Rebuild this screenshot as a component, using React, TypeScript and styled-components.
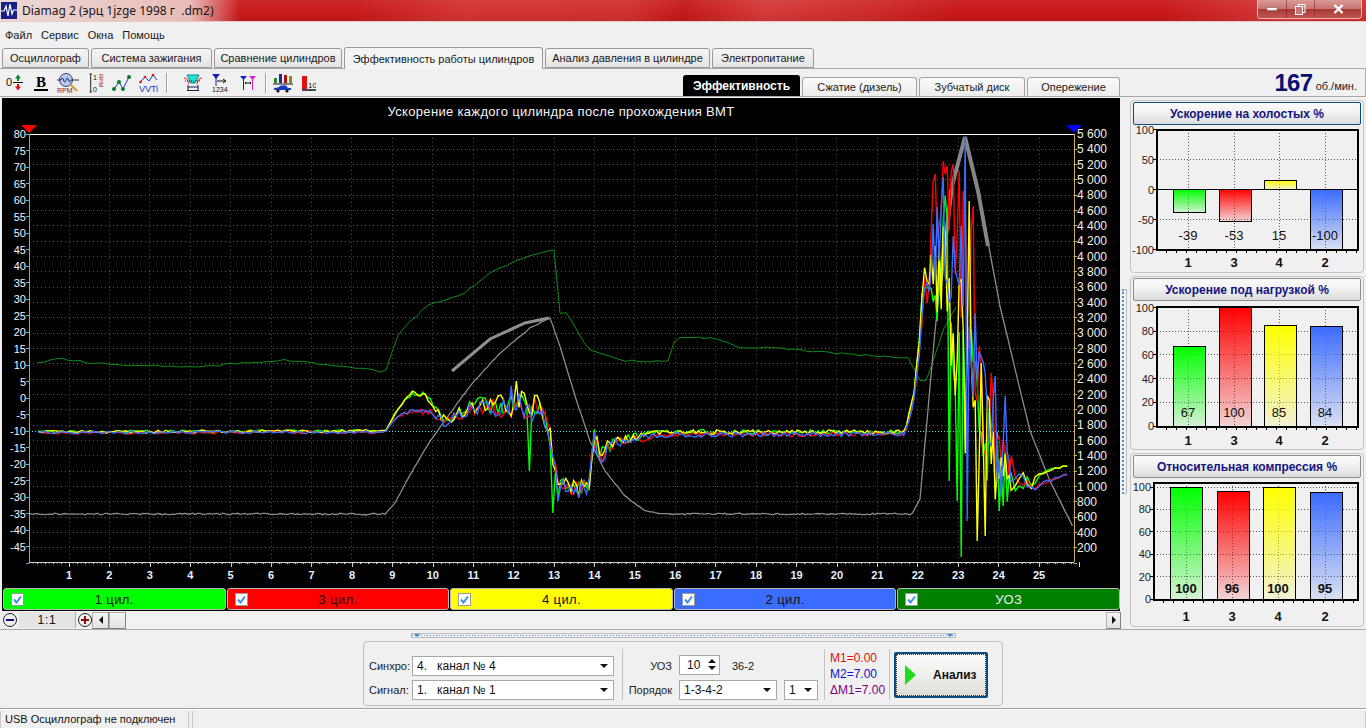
import React from 'react';
import styled, { createGlobalStyle } from 'styled-components';

const GlobalStyle = createGlobalStyle`
  html, body { margin: 0; padding: 0; background: #f0f0f0; overflow: hidden; }
  body { font-family: "Liberation Sans", Arial, sans-serif; font-size: 12px; color: #111; }
`;

const Window = styled.div`
  width: 1366px;
  height: 728px;
  display: flex;
  flex-direction: column;
  overflow: hidden;
  background: #f0f0f0;
`;

/* ---------- title bar ---------- */
const TitleBar = styled.div`
  height: 21px;
  flex: none;
  display: flex;
  align-items: center;
  padding-left: 1px;
  border-bottom: 1px solid #e8c8c8;
  background:
    linear-gradient(90deg, rgba(238, 226, 222, 0.95) 0, rgba(236, 205, 200, 0.9) 190px, rgba(220, 120, 110, 0) 240px),
    linear-gradient(180deg, rgba(255, 255, 255, 0.06) 0, rgba(255, 255, 255, 0) 60%, rgba(0, 0, 0, 0.06) 100%),
    linear-gradient(100deg, #c81a1a 0, #c81a1a 26%, #d23434 34%, #d03030 46%, #c41a1a 50%, #d43a3a 56%, #cc2a2a 64%, #c81818 70%, #c81818 85%, #d43a3a 94%, #cf3030 100%);
`;

const TitleText = styled.span`
  font-family: "Noto Sans", "Open Sans", sans-serif;
  font-size: 12px;
  color: #16161a;
  margin-left: 5px;
  white-space: pre;
`;

const WinButtons = styled.div`
  margin-left: auto;
  margin-right: 4px;
  align-self: flex-start;
  display: flex;
  height: 18px;
  border: 1px solid rgba(255, 255, 255, 0.65);
  border-top: none;
  border-radius: 0 0 4px 4px;
  overflow: hidden;
`;

const WinButton = styled.div<{ $w: number }>`
  width: ${(p) => p.$w}px;
  display: flex;
  align-items: center;
  justify-content: center;
  border-right: 1px solid rgba(120, 30, 30, 0.5);
  background: linear-gradient(180deg, #d99a96 0, #c97672 48%, #a83a36 52%, #c05450 100%);
  &:last-child { border-right: none; }
`;

/* ---------- menu and tabs ---------- */
const MenuBar = styled.div`
  height: 24px;
  flex: none;
  display: flex;
  align-items: center;
  gap: 9px;
  padding: 2px 0 0 5px;
  box-sizing: border-box;
  font-size: 11px;
  color: #1a1a1a;
`;

const TabRow = styled.div`
  height: 23px;
  flex: none;
  display: flex;
  align-items: flex-end;
  padding-left: 2px;
  gap: 2px;
  border-bottom: 1px solid #a8a8a8;
  box-sizing: border-box;
`;

const Tab = styled.div<{ $w: number; $active?: boolean }>`
  width: ${(p) => p.$w}px;
  height: ${(p) => (p.$active ? 22 : 20)}px;
  margin-bottom: ${(p) => (p.$active ? -1 : 0)}px;
  box-sizing: border-box;
  display: flex;
  align-items: center;
  justify-content: center;
  font-size: 11px;
  color: #1a1a1a;
  border: 1px solid #9a9a9a;
  border-bottom: ${(p) => (p.$active ? 'none' : '1px solid #9a9a9a')};
  border-radius: 3px 3px 0 0;
  background: ${(p) => (p.$active ? '#f4f4f4' : 'linear-gradient(180deg, #f6f6f6, #e4e4e4)')};
`;

const ToolRow = styled.div`
  height: 28px;
  flex: none;
  display: flex;
  align-items: flex-end;
  box-sizing: border-box;
  border-right: 1px solid #b0b0b0;
  border-bottom: 1px solid #a8a8a8;
  padding-left: 2px;
  position: relative;
`;

const ToolIcons = styled.div`
  width: 681px;
  height: 27px;
  flex: none;
  display: flex;
  align-items: center;
`;

const ToolIcon = styled.svg<{ $ml: number }>`
  margin-left: ${(p) => p.$ml}px;
  flex: none;
`;

const ToolSep = styled.div<{ $ml: number }>`
  width: 1px;
  height: 20px;
  margin-left: ${(p) => p.$ml}px;
  background: #a0a0a0;
  border-right: 1px solid #fff;
  flex: none;
`;

const SubTabs = styled.div`
  display: flex;
  align-items: flex-end;
  gap: 2px;
`;

const SubTab = styled.div<{ $w: number; $active?: boolean }>`
  width: ${(p) => p.$w}px;
  height: ${(p) => (p.$active ? 21 : 19)}px;
  box-sizing: border-box;
  display: flex;
  align-items: center;
  justify-content: center;
  font-size: ${(p) => (p.$active ? 12 : 11)}px;
  font-weight: ${(p) => (p.$active ? 700 : 400)};
  color: ${(p) => (p.$active ? '#fff' : '#222')};
  background: ${(p) => (p.$active ? '#000' : 'linear-gradient(180deg, #fafafa, #ececec)')};
  border: 1px solid ${(p) => (p.$active ? '#000' : '#a4a4a4')};
  border-bottom: none;
  border-radius: 3px 3px 0 0;
`;

const RpmBox = styled.div`
  margin-left: auto;
  margin-right: 8px;
  height: 27px;
  display: flex;
  align-items: center;
  gap: 3px;
`;

const RpmValue = styled.span`
  font-size: 24px;
  font-weight: 700;
  color: #0a1070;
  letter-spacing: -0.6px;
`;

const RpmUnit = styled.span`
  font-size: 11px;
  color: #222;
  margin-top: 6px;
`;

/* ---------- main body ---------- */
const Body = styled.div`
  height: 532px;
  flex: none;
  display: flex;
`;

const LeftColumn = styled.div`
  width: 1121px;
  flex: none;
  padding: 1px 0 0 2px;
  box-sizing: border-box;
  display: flex;
  flex-direction: column;
`;

const PlotPanel = styled.div`
  width: 1118px;
  height: 513px;
  background: #000;
  display: flex;
  flex-direction: column;
  flex: none;
`;

const PlotTitle = styled.div`
  height: 27px;
  flex: none;
  color: #f4f4f4;
  font-size: 13px;
  text-align: center;
  line-height: 27px;
  letter-spacing: 0.33px;
  padding-right: 0;
`;

const PlotSvg = styled.svg`
  display: block;
  flex: none;
`;

const Legend = styled.div`
  display: flex;
  gap: 1px;
  padding-left: 1px;
  height: 22px;
  flex: none;
`;

const LegendItem = styled.div<{ $bg: string; $fg: string }>`
  flex: 1;
  box-sizing: border-box;
  display: flex;
  align-items: center;
  position: relative;
  background: ${(p) => p.$bg};
  color: ${(p) => p.$fg};
  border: 1px solid #b8b8b8;
  border-radius: 3px;
  font-size: 13px;
  letter-spacing: 0.4px;
`;

const LegendLabel = styled.span`
  flex: 1;
  text-align: center;
`;

const CheckBox = styled.div`
  width: 13px;
  height: 13px;
  box-sizing: border-box;
  margin-left: 7px;
  background: #fff;
  border: 1px solid #9a9a9a;
  display: flex;
  align-items: center;
  justify-content: center;
  position: absolute;
`;

const ScrollRow = styled.div`
  height: 18px;
  flex: none;
  display: flex;
  align-items: center;
  width: 1118px;
  margin-left: 1px;
`;

const ZoomRound = styled.div`
  width: 14px;
  height: 14px;
  border-radius: 50%;
  box-sizing: border-box;
  border: 1px solid #222;
  background: #eee;
  display: flex;
  align-items: center;
  justify-content: center;
  flex: none;
`;

const ZoomBox = styled.div`
  width: 56px;
  height: 16px;
  margin: 0 2px;
  background: #e4e4e4;
  border-right: 1px solid #aaa;
  font-size: 12px;
  text-align: center;
  line-height: 17px;
  letter-spacing: 0.8px;
  flex: none;
`;

const ScrollBtn = styled.div<{ $w: number }>`
  width: ${(p) => p.$w}px;
  height: 17px;
  box-sizing: border-box;
  background: linear-gradient(180deg, #f4f4f4, #e2e2e2);
  border: 1px solid #b0b0b0;
  border-bottom-color: #808080;
  border-right-color: #808080;
  display: flex;
  align-items: center;
  justify-content: center;
  flex: none;
`;

const ScrollTrack = styled.div`
  flex: 1;
  height: 17px;
  background: repeating-conic-gradient(#e8e8e8 0 25%, #fbfbfb 0 50%) 0 0 / 2px 2px;
`;

const Arrow = styled.div<{ $dir: 'l' | 'r' | 'u' | 'd'; $s?: number }>`
  width: 0;
  height: 0;
  border-style: solid;
  ${(p) => {
    const s = p.$s ?? 4;
    if (p.$dir === 'l') return `border-width:${s}px ${s}px ${s}px 0;border-color:transparent #111 transparent transparent;`;
    if (p.$dir === 'r') return `border-width:${s}px 0 ${s}px ${s}px;border-color:transparent transparent transparent #111;`;
    if (p.$dir === 'u') return `border-width:0 ${s}px ${s}px ${s}px;border-color:transparent transparent #111 transparent;`;
    return `border-width:${s}px ${s}px 0 ${s}px;border-color:#111 transparent transparent transparent;`;
  }}
`;

const Grip = styled.div`
  width: 9px;
  flex: none;
  display: flex;
  align-items: center;
  padding-top: 56px;
  box-sizing: border-box;
`;

const GripHandle = styled.div`
  width: 5px;
  height: 205px;
  margin-left: 1px;
  box-sizing: border-box;
  border: 1px solid #bbb;
  background: #f4f4f4;
  border-left: 2px dotted #4a90d8;
`;

const RightColumn = styled.div`
  width: 234px;
  flex: none;
  padding-top: 3px;
  display: flex;
  flex-direction: column;
  gap: 3px;
`;

const GroupBox = styled.div<{ $h: number }>`
  height: ${(p) => p.$h}px;
  box-sizing: border-box;
  border: 1px solid #c4c4c4;
  border-radius: 4px;
  padding: 1px 2px 0;
  flex: none;
  background: #f0f0f0;
`;

const ChartHeader = styled.div<{ $focus?: boolean }>`
  height: 23px;
  box-sizing: border-box;
  display: flex;
  align-items: center;
  justify-content: center;
  font-size: 12px;
  font-weight: 700;
  color: #14147e;
  border: 1px solid ${(p) => (p.$focus ? '#0a4a80' : '#8c8c8c')};
  border-radius: 2px;
  background: linear-gradient(180deg, #fbfbfb 0, #f0f0f0 50%, #dcdcdc 100%);
`;

const MiniSvg = styled.svg`
  display: block;
  margin-left: -2px;
`;

/* ---------- bottom ---------- */
const Bottom = styled.div`
  flex: 1;
  display: flex;
  flex-direction: column;
  align-items: center;
  border-top: 1px solid #a8a8a8;
`;

const SplitBar = styled.div`
  width: 545px;
  height: 5px;
  margin-top: 3px;
  box-sizing: border-box;
  border: 1px solid #bbb;
  display: flex;
  align-items: center;
  justify-content: space-between;
  padding: 0 2px;
  background: linear-gradient(90deg, #4a90d8 50%, transparent 50%) 0 1px / 3px 1px repeat-x;
  flex: none;
`;

const SplitMark = styled.div`
  width: 0;
  height: 0;
  border-style: solid;
  border-width: 3px 3px 0;
  border-color: #3a88d8 transparent transparent;
`;

const Controls = styled.div`
  width: 640px;
  height: 65px;
  margin-top: 3px;
  box-sizing: border-box;
  border: 1px solid #c0c0c0;
  border-radius: 4px;
  display: flex;
  align-items: center;
  padding: 2px 0 0 5px;
  flex: none;
`;

const FieldStack = styled.div`
  display: flex;
  flex-direction: column;
  gap: 4px;
  margin-top: 6px;
`;

const FieldRow = styled.div`
  display: flex;
  align-items: center;
  height: 20px;
`;

const FieldLabel = styled.span<{ $w: number; $right?: boolean }>`
  width: ${(p) => p.$w}px;
  text-align: ${(p) => (p.$right ? 'right' : 'left')};
  flex: none;
  font-size: 11px;
  color: #222;
`;

const Combo = styled.div<{ $w: number; $ml?: number }>`
  width: ${(p) => p.$w}px;
  margin-left: ${(p) => p.$ml ?? 0}px;
  height: 20px;
  box-sizing: border-box;
  background: #fff;
  border: 1px solid #a8a8a8;
  display: flex;
  align-items: center;
  justify-content: space-between;
  padding: 0 5px 0 4px;
  font-size: 12px;
  white-space: pre;
  flex: none;
`;

const VSep = styled.div<{ $ml: number }>`
  width: 1px;
  height: 51px;
  margin: 0 0 0 ${(p) => p.$ml}px;
  background: #c4c4c4;
  flex: none;
`;

const Spin = styled.div`
  width: 41px;
  height: 20px;
  margin-top: -2px;
  box-sizing: border-box;
  background: #fff;
  border: 1px solid #a8a8a8;
  display: flex;
  align-items: center;
  justify-content: space-between;
  padding: 0 3px 0 7px;
  font-size: 12px;
  flex: none;
`;

const SpinArrows = styled.div`
  display: flex;
  flex-direction: column;
  gap: 3px;
`;

const MiniText = styled.span`
  font-size: 11px;
  color: #222;
  margin-left: 12px;
`;

const Measures = styled.div`
  width: 64px;
  padding-left: 5px;
  box-sizing: border-box;
  display: flex;
  flex-direction: column;
  gap: 3px;
  font-size: 12px;
  flex: none;
`;

const Measure = styled.span<{ $c: string }>`
  color: ${(p) => p.$c};
  height: 13px;
  line-height: 13px;
`;

const RunButton = styled.div`
  width: 94px;
  height: 46px;
  margin: 0 0 0 4px;
  box-sizing: border-box;
  border: 2px solid #0a4a80;
  border-radius: 2px;
  outline: 1px dotted #333;
  outline-offset: -3px;
  background: linear-gradient(180deg, #fafafa 0, #eeeeea 55%, #dedcd4 100%);
  display: flex;
  align-items: center;
  padding-left: 9px;
  font-size: 12px;
  font-weight: 700;
  flex: none;
`;

const RunIcon = styled.div`
  width: 0;
  height: 0;
  border-style: solid;
  border-width: 10px 0 10px 11px;
  border-color: transparent transparent transparent #1fdc1f;
  margin-right: 17px;
`;

const StatusBar = styled.div`
  height: 20px;
  flex: none;
  display: flex;
  gap: 3px;
  border-top: 1px solid #a0a0a0;
  box-shadow: inset 0 1px 0 #fff;
  padding-top: 2px;
  box-sizing: border-box;
`;

const StatusCell = styled.div<{ $w?: number }>`
  width: ${(p) => (p.$w ? `${p.$w}px` : 'auto')};
  flex: ${(p) => (p.$w ? 'none' : 1)};
  font-size: 11px;
  padding-left: 4px;
  box-sizing: border-box;
  border-left: 1px solid #c8c8c8;
  border-right: 1px solid #c8c8c8;
  line-height: 16px;
`;

/* ---------- data for main plot ---------- */
type Knot = [number, number];

const lerp = (k: Knot[], x: number) => {
  if (x <= k[0][0]) return k[0][1];
  for (let i = 1; i < k.length; i++) {
    if (x <= k[i][0]) {
      const t = (x - k[i - 1][0]) / (k[i][0] - k[i - 1][0]);
      return k[i - 1][1] + (k[i][1] - k[i - 1][1]) * t;
    }
  }
  return k[k.length - 1][1];
};

const rng = (seed: number) => {
  let s = seed;
  return () => {
    s = (s * 1664525 + 1013904223) % 4294967296;
    return s / 4294967296;
  };
};

const toPoints = (p: number[][]) => p.map(([x, y]) => `${x.toFixed(1)},${y.toFixed(1)}`).join(' ');

const ampKnots: Knot[] = [
  [38, 3], [385, 3], [400, 3], [430, 7], [470, 14], [500, 22], [548, 34], [556, 12], [590, 18], [596, 20],
  [612, 10], [660, 5], [905, 4], [915, 6], [925, 30], [945, 150], [965, 190], [978, 120], [995, 85],
  [1012, 40], [1030, 10], [1045, 4], [1070, 1.5],
];

const highKnots: Knot[] = [
  [38, 431], [385, 430], [398, 408], [412, 392], [425, 393], [445, 420], [470, 405], [520, 403], [545, 412],
  [558, 482], [580, 488], [590, 480], [593, 432], [600, 452], [615, 440], [660, 431], [905, 431], [915, 385],
  [925, 270], [945, 235], [962, 330], [985, 425], [1000, 472], [1030, 484], [1045, 470], [1070, 464],
];

const lowKnots: Knot[] = [
  [38, 432], [385, 431], [398, 415], [412, 410], [430, 412], [445, 422], [470, 408], [520, 405], [545, 414],
  [558, 482], [580, 490], [590, 482], [593, 432], [600, 456], [615, 442], [660, 434], [905, 433], [915, 395],
  [925, 285], [945, 245], [962, 310], [985, 410], [1000, 465], [1030, 488], [1045, 482], [1070, 472],
];

const makeTrace = (seed: number, knots: Knot[], spikes: Knot[], shift = 0) => {
  const r = rng(seed);
  const pts: number[][] = [];
  let x = 38;
  while (x <= 1070) {
    const burst = x > 400 && x < 1010;
    const m = lerp(knots, x);
    const a = lerp(ampKnots, x);
    const y = Math.min(561, Math.max(134, m + (r() - 0.5) * a + (x > 930 && x < 975 ? shift : 0)));
    pts.push([x, y]);
    x += x > 925 && x < 1010 ? 2 : burst ? 2.6 : 4;
  }
  spikes.forEach(([sx, sy]) => {
    const i = pts.findIndex((p) => p[0] >= sx);
    if (i >= 0) pts[i][1] = sy;
  });
  return toPoints(pts);
};

const traces = [
  { color: '#00ff00', pts: makeTrace(11, highKnots, [[948, 480], [957, 500], [961, 556], [998, 510], [1002, 505], [527, 470], [552, 512], [556, 495]], 30) },
  { color: '#ff0000', pts: makeTrace(23, lowKnots, [[947, 165], [952, 163], [958, 170], [962, 190], [972, 205], [977, 400], [990, 372]], -55) },
  { color: '#ffff00', pts: makeTrace(37, highKnots, [[938, 245], [968, 560], [977, 540], [984, 535], [968, 200], [514, 380], [553, 470]], 25) },
  { color: '#3a6cff', pts: makeTrace(53, lowKnots, [[964, 136], [966, 520], [985, 372], [995, 375], [1005, 395], [510, 385], [556, 500]], -10) },
];

const rpmPts = (() => {
  const k: Knot[] = [
    [30, 513], [385, 513], [395, 502], [410, 474], [430, 440], [470, 385], [500, 352], [530, 327], [550, 317],
    [560, 345], [575, 395], [590, 440], [605, 470], [625, 495], [645, 510], [665, 513], [912, 513], [920, 498],
    [935, 330], [950, 190], [965, 136], [985, 225], [1000, 305], [1030, 430], [1050, 480], [1074, 528],
  ];
  const r = rng(71);
  const p: number[][] = [];
  for (let x = 30; x <= 1074; x += 2.5) {
    const flat = x < 385 || (x > 660 && x < 912);
    p.push([x, lerp(k, x) + (r() - 0.5) * (flat ? 1.6 : 0.8)]);
  }
  return toPoints(p);
})();

const uozPts = (() => {
  const k: Knot[] = [
    [38, 362], [60, 358], [100, 363], [200, 366], [280, 359], [340, 365], [385, 371], [400, 330], [430, 303],
    [460, 295], [490, 272], [530, 254], [555, 249], [556, 312], [566, 312], [590, 350], [625, 360], [670, 360],
    [675, 337], [710, 337], [740, 346], [790, 348], [860, 354], [910, 357], [918, 380], [926, 380], [945, 325], [960, 300],
  ];
  const r = rng(91);
  const p: number[][] = [];
  for (let x = 38; x <= 960; x += 6) p.push([x, lerp(k, x) + (r() - 0.5) * 2]);
  return toPoints(p);
})();

const range = (n: number, f: (i: number) => number) => Array.from({ length: n }, (_, i) => f(i));

const MainPlot: React.FC = () => {
  const left = 29;
  const right = 1074;
  const top = 133;
  const bottom = 561;
  const gridY = range(28, (i) => top + 15.33 * (i + 1));
  const xLabels = range(25, (i) => 69 + 40.42 * i);
  const leftLabels = range(26, (i) => 80 - 5 * i);
  const rightLabels = range(28, (i) => 5600 - 200 * i);
  return (
    <PlotSvg width={1118} height={463} viewBox="2 124 1118 463">
      {gridY.map((y) => (
        <line key={y} x1={left} x2={right} y1={y} y2={y} stroke="#5a5a5a" strokeDasharray="1 3" shapeRendering="crispEdges" />
      ))}
      {xLabels.map((x) => (
        <line key={x} x1={x} x2={x} y1={top} y2={bottom} stroke="#4a4a4a" strokeDasharray="1 3" shapeRendering="crispEdges" />
      ))}
      <line x1={left} x2={right} y1={430} y2={430} stroke="#3fe6f0" strokeDasharray="1 2" shapeRendering="crispEdges" />
      <polyline points={uozPts} fill="none" stroke="#0f8a1a" strokeWidth={1} />
      <polyline points={rpmPts} fill="none" stroke="#8c8c8c" strokeWidth={1.3} />
      <polyline points="452,370 490,338 525,322 549,317" fill="none" stroke="#8f8f8f" strokeWidth={3} />
      <polyline points="940,285 952,185 965,136 978,190 988,245" fill="none" stroke="#858585" strokeWidth={4} />
      {traces.map((t) => (
        <polyline key={t.color} points={t.pts} fill="none" stroke={t.color} strokeWidth={1.4} />
      ))}
      <line x1={left} x2={right} y1={top} y2={top} stroke="#fff" shapeRendering="crispEdges" />
      <line x1={left} x2={left} y1={top} y2={bottom} stroke="#5fb8c0" shapeRendering="crispEdges" />
      <line x1={right} x2={right} y1={top} y2={bottom} stroke="#c8b050" shapeRendering="crispEdges" />
      <line x1={left} x2={right} y1={bottom} y2={bottom} stroke="#d0d0d0" shapeRendering="crispEdges" />
      {range(130, (i) => left + 8.08 * (i + 1)).map((x, i) => (
        <line key={x} x1={x} x2={x} y1={bottom} y2={bottom + ((i + 5) % 5 === 4 ? 5 : 2)} stroke="#d0d0d0" shapeRendering="crispEdges" />
      ))}
      {range(27, (i) => top + 16.5 * i).map((y) => (
        <line key={y} x1={left - 3} x2={left} y1={y} y2={y} stroke="#5fb8c0" shapeRendering="crispEdges" />
      ))}
      {gridY.map((y) => (
        <line key={`r${y}`} x1={right} x2={right + 3} y1={y} y2={y} stroke="#c8b050" shapeRendering="crispEdges" />
      ))}
      <polygon points="21,124 37,124 29,132" fill="#ff0000" />
      <polygon points="1066,124 1082,124 1074,132" fill="#0000ff" />
      {leftLabels.map((v, i) => (
        <text key={v} x={26} y={top + 16.5 * i + 4} fontSize={11} fill="#f0f4ff" textAnchor="end">{v}</text>
      ))}
      {rightLabels.map((v, i) => (
        <text key={v} x={1077} y={top + 15.33 * i + 4} fontSize={12} fill="#f4f0e4">
          {v >= 1000 ? `${Math.floor(v / 1000)} ${String(v % 1000).padStart(3, '0')}` : v}
        </text>
      ))}
      {xLabels.map((x, i) => (
        <text key={x} x={x} y={578} fontSize={11} fontWeight={700} fill="#e8f0ff" textAnchor="middle">{i + 1}</text>
      ))}
    </PlotSvg>
  );
};

/* ---------- bar charts ---------- */
const barColors: Record<string, string> = {
  g: '#00ff00',
  r: '#ff0000',
  y: '#ffff00',
  b: '#3a6cff',
};

interface IBar {
  key: string;
  label: string;
  value: number;
  x: number;
  cx: number;
}

interface IMiniProps {
  id: string;
  top: number;
  height: number;
  plot: { l: number; t: number; b: number };
  zero: number;
  scale: number;
  ticks: number[];
  bars: IBar[];
  valueY: number;
  labelY: number;
  bold?: boolean;
}

const MiniChart: React.FC<IMiniProps> = ({ id, top, height, plot, zero, scale, ticks, bars, valueY, labelY, bold }) => {
  const r = 1358;
  return (
    <MiniSvg width={232} height={height} viewBox={`1131 ${top} 232 ${height}`}>
      <defs>
        {Object.keys(barColors).map((k) => (
          <linearGradient key={k} id={`${id}${k}`} x1="0" y1="0" x2="0" y2="1">
            <stop offset="0" stopColor={barColors[k]} />
            <stop offset="1" stopColor={barColors[k]} stopOpacity={0.12} />
          </linearGradient>
        ))}
      </defs>
      {ticks.map((t) => (
        <line key={t} x1={plot.l} x2={r} y1={zero - t * scale} y2={zero - t * scale} stroke="#555" strokeDasharray="1 2" shapeRendering="crispEdges" />
      ))}
      {bars.map((b) => (
        <line key={b.cx} x1={b.cx} x2={b.cx} y1={plot.t} y2={plot.b} stroke="#555" strokeDasharray="1 2" shapeRendering="crispEdges" />
      ))}
      {bars.map((b) => {
        const h = Math.abs(b.value) * scale;
        return (
          <rect
            key={b.key}
            x={b.x}
            y={b.value >= 0 ? zero - h : zero}
            width={32}
            height={h}
            fill={`url(#${id}${b.key})`}
            stroke="#000"
            strokeWidth={1}
            shapeRendering="crispEdges"
          />
        );
      })}
      <rect x={plot.l} y={plot.t} width={r - plot.l} height={plot.b - plot.t} fill="none" stroke="#000" strokeWidth={2} shapeRendering="crispEdges" />
      {ticks.some((t) => t < 0) && <line x1={plot.l} x2={r} y1={zero} y2={zero} stroke="#000" shapeRendering="crispEdges" />}
      {ticks.map((t) => (
        <g key={t}>
          <line x1={plot.l - 4} x2={plot.l} y1={zero - t * scale} y2={zero - t * scale} stroke="#000" shapeRendering="crispEdges" />
          <text x={plot.l - 3} y={zero - t * scale + 4} fontSize={11} fill="#222" textAnchor="end">{t}</text>
        </g>
      ))}
      {range(20, (i) => plot.l + 9 + i * 10).map((x) => (
        <line key={x} x1={x} x2={x} y1={plot.b} y2={plot.b + 3} stroke="#000" shapeRendering="crispEdges" />
      ))}
      {bars.map((b) => (
        <g key={b.cx}>
          <text x={b.cx} y={valueY} fontSize={13} fontWeight={bold ? 700 : 400} fill="#111" textAnchor="middle">{b.value}</text>
          <text x={b.cx} y={labelY} fontSize={13} fontWeight={700} fill="#111" textAnchor="middle">{b.label}</text>
        </g>
      ))}
    </MiniSvg>
  );
};

const mkBars = (vals: number[], xs: number[], cxs: number[]): IBar[] =>
  ['g', 'r', 'y', 'b'].map((key, i) => ({
    key,
    label: ['1', '3', '4', '2'][i],
    value: vals[i],
    x: xs[i],
    cx: cxs[i],
  }));

/* ---------- toolbar drawings ---------- */
const IconSign = () => (
  <ToolIcon $ml={4} width={17} height={19} viewBox="0 0 17 19">
    <text x={0} y={13} fontSize={11} fill="#111">0</text>
    <line x1={7} x2={17} y1={9.5} y2={9.5} stroke="#111" />
    <path d="M12 1.5 L15 5.5 H13 V8 H11 V5.5 H9 Z" fill="#0a8a2a" />
    <path d="M12 17.5 L15 13.5 H13 V11 H11 V13.5 H9 Z" fill="#e01010" />
  </ToolIcon>
);

const IconBold = () => (
  <ToolIcon $ml={11} width={14} height={18} viewBox="0 0 14 18">
    <text x={7} y={13} fontSize={15} fontWeight={700} fontFamily="Liberation Serif" fill="#000" textAnchor="middle">B</text>
    <rect x={0} y={15} width={14} height={2} fill="#000" />
  </ToolIcon>
);

const IconScope = () => (
  <ToolIcon $ml={9} width={22} height={20} viewBox="0 0 22 20">
    <circle cx={9} cy={7} r={6.5} fill="#b9c8ee" stroke="#33426e" />
    <path d="M4 7 q1.5 -4 2.5 0 t2.5 0 t2.5 0 t2.5 0" fill="none" stroke="#222a80" />
    <line x1={0} x2={4} y1={7} y2={7} stroke="#333" />
    <line x1={14} x2={22} y1={7} y2={7} stroke="#333" />
    <line x1={14} y1={12} x2={20} y2={18} stroke="#d8a030" strokeWidth={2.4} />
    <text x={0} y={19.5} fontSize={7} fill="#8a1010">RPM</text>
  </ToolIcon>
);

const IconRange = () => (
  <ToolIcon $ml={10} width={15} height={20} viewBox="0 0 15 20">
    <path d="M0.5 1 H3 M1.7 1 V19 M0.5 19 H3" stroke="#222" fill="none" />
    <text x={4} y={7} fontSize={7} fill="#111">1</text>
    <text x={4} y={19} fontSize={7} fill="#111">0</text>
    <text x={0} y={0} fontSize={6} fill="#8a1010" transform="translate(10 1) rotate(90)">RPM</text>
  </ToolIcon>
);

const IconZig = () => (
  <ToolIcon $ml={8} width={20} height={18} viewBox="0 0 20 18">
    <path d="M2 15 L7 8 L11 15 L17 3" fill="none" stroke="#1a3ad0" />
    <g fill="#0a7a2a">
      <circle cx={2} cy={15} r={2} />
      <circle cx={7} cy={8} r={2} />
      <circle cx={11} cy={15} r={2} />
      <circle cx={17} cy={3} r={2} />
    </g>
  </ToolIcon>
);

const IconVvt = () => (
  <ToolIcon $ml={7} width={20} height={20} viewBox="0 0 20 20">
    <path d="M1 9 L6 4 L10 8 L14 2 L18 7" fill="none" stroke="#1a3ad0" />
    <g fill="#e01010">
      <circle cx={6} cy={4} r={1.3} />
      <circle cx={14} cy={2} r={1.3} />
      <circle cx={1.5} cy={9} r={1.3} />
    </g>
    <text x={0} y={19} fontSize={9.5} fill="#1a3ad0" letterSpacing={-0.4}>VVTi</text>
  </ToolIcon>
);

const IconFunnel = () => (
  <ToolIcon $ml={16} width={18} height={19} viewBox="0 0 18 19">
    <path d="M3 2 H15 L11 10 H7 Z" fill="#20e0d8" stroke="#108a88" />
    <path d="M0 5 Q4 5 5 11 M18 5 Q14 5 13 11" fill="none" stroke="#e01010" />
    <line x1={1} x2={17} y1={8} y2={8} stroke="#222" strokeDasharray="1 1" />
    <path d="M4 14 H14 M4 12 V18 M14 12 V18 M3 17.5 H15" stroke="#1a1a50" fill="none" />
  </ToolIcon>
);

const IconSync = () => (
  <ToolIcon $ml={10} width={16} height={20} viewBox="0 0 16 20">
    <path d="M0 1 H8 L4 6 Z" fill="#1a1ac0" />
    <line x1={4} x2={4} y1={5} y2={13} stroke="#1a1ac0" />
    <path d="M5 8 H13 M11 6 L14 8 L11 10" stroke="#111" fill="none" />
    <text x={0} y={19} fontSize={7} fill="#111">1234</text>
  </ToolIcon>
);

const IconGap = () => (
  <ToolIcon $ml={12} width={16} height={18} viewBox="0 0 16 18">
    <path d="M0 2 H7 L3.5 6 Z" fill="#1a1ac0" />
    <path d="M9 2 H16 L12.5 6 Z" fill="#e020d0" />
    <line x1={3.5} x2={3.5} y1={5} y2={16} stroke="#1a1ac0" />
    <line x1={12.5} x2={12.5} y1={5} y2={16} stroke="#e020d0" />
    <path d="M5 9 H11 M6 8 L5 9 L6 10 M10 8 L11 9 L10 10" stroke="#111" fill="none" />
  </ToolIcon>
);

const IconCar = () => (
  <ToolIcon $ml={6} width={20} height={20} viewBox="0 0 20 20">
    <rect x={1} y={5} width={3} height={5} fill="#2a8a2a" />
    <rect x={6} y={1} width={3} height={9} fill="#1a2aa0" />
    <rect x={11} y={2} width={3} height={8} fill="#b01010" />
    <rect x={16} y={3} width={3} height={7} fill="#8a8a20" />
    <line x1={0} x2={20} y1={11} y2={11} stroke="#111" />
    <path d="M1 17 V15 L5 14.5 L8 12.5 H13 L15 15 H18 V17 Z" fill="#1a3ac0" />
    <circle cx={5} cy={18} r={1.6} fill="#111" />
    <circle cx={14} cy={18} r={1.6} fill="#111" />
  </ToolIcon>
);

const IconTen = () => (
  <ToolIcon $ml={9} width={14} height={18} viewBox="0 0 14 18">
    <rect x={0} y={2} width={5} height={13} fill="#e01010" />
    <text x={6} y={14} fontSize={8} fill="#111">10</text>
    <line x1={0} x2={14} y1={16} y2={16} stroke="#111" strokeWidth={1.5} />
  </ToolIcon>
);

const Check = () => (
  <svg width={9} height={9} viewBox="0 0 9 9">
    <path d="M1 4.5 L3.5 7.5 L8 1.5" fill="none" stroke="#3a90e8" strokeWidth={2} />
  </svg>
);

const legendItems = [
  { text: '1 цил.', bg: '#00ff00', fg: '#111' },
  { text: '3 цил.', bg: '#ff0000', fg: '#111' },
  { text: '4 цил.', bg: '#ffff00', fg: '#111' },
  { text: '2 цил.', bg: '#3a6cff', fg: '#111' },
  { text: 'УОЗ', bg: '#007f00', fg: '#eee' },
];

const App: React.FC = () => (
  <Window>
    <GlobalStyle />
    <TitleBar>
      <svg width={16} height={17} viewBox="0 0 16 17">
        <rect width={16} height={17} fill="#15208a" />
        <path d="M0 9 H3 L5 4 L7 14 L9 2 L11 12 L12.5 8 H16" fill="none" stroke="#fff" strokeWidth={1.2} />
      </svg>
      <TitleText>Diamag 2 (эрц 1jzge 1998 г  .dm2)</TitleText>
      <WinButtons>
        <WinButton $w={28}><svg width={10} height={4}><rect width={10} height={3} y={0.5} fill="#fff" stroke="#555" strokeWidth={0.5} /></svg></WinButton>
        <WinButton $w={27}><svg width={11} height={11}><rect x={3} y={0.5} width={7} height={8} fill="none" stroke="#fff" /><rect x={0.5} y={2.5} width={7} height={8} fill="#c97672" stroke="#fff" /></svg></WinButton>
        <WinButton $w={46}><svg width={11} height={10}><path d="M1.5 1 L9.5 9 M9.5 1 L1.5 9" stroke="#fff" strokeWidth={2.4} /></svg></WinButton>
      </WinButtons>
    </TitleBar>
    <MenuBar>
      <span>Файл</span>
      <span>Сервис</span>
      <span>Окна</span>
      <span>Помощь</span>
    </MenuBar>
    <TabRow>
      <Tab $w={87}>Осциллограф</Tab>
      <Tab $w={121}>Система зажигания</Tab>
      <Tab $w={128}>Сравнение цилиндров</Tab>
      <Tab $w={199} $active>Эффективность работы цилиндров</Tab>
      <Tab $w={165}>Анализ давления в цилиндре</Tab>
      <Tab $w={102}>Электропитание</Tab>
    </TabRow>
    <ToolRow>
      <ToolIcons>
        <IconSign />
        <IconBold />
        <IconScope />
        <IconRange />
        <IconZig />
        <IconVvt />
        <ToolSep $ml={7} />
        <IconFunnel />
        <IconSync />
        <IconGap />
        <ToolSep $ml={9} />
        <IconCar />
        <IconTen />
      </ToolIcons>
      <SubTabs>
        <SubTab $w={117} $active>Эффективность</SubTab>
        <SubTab $w={115}>Сжатие (дизель)</SubTab>
        <SubTab $w={106}>Зубчатый диск</SubTab>
        <SubTab $w={93}>Опережение</SubTab>
      </SubTabs>
      <RpmBox>
        <RpmValue>167</RpmValue>
        <RpmUnit>об./мин.</RpmUnit>
      </RpmBox>
    </ToolRow>
    <Body>
      <LeftColumn>
        <PlotPanel>
          <PlotTitle>Ускорение каждого цилиндра после прохождения ВМТ</PlotTitle>
          <MainPlot />
          <Legend>
            {legendItems.map((l) => (
              <LegendItem key={l.text} $bg={l.bg} $fg={l.fg}>
                <CheckBox><Check /></CheckBox>
                <LegendLabel>{l.text}</LegendLabel>
              </LegendItem>
            ))}
          </Legend>
        </PlotPanel>
        <ScrollRow>
          <ZoomRound><svg width={8} height={8}><rect y={3} width={8} height={2} fill="#10108a" /></svg></ZoomRound>
          <ZoomBox>1:1</ZoomBox>
          <ZoomRound><svg width={8} height={8}><path d="M0 4 H8 M4 0 V8" stroke="#8a1010" strokeWidth={2} /></svg></ZoomRound>
          <ScrollBtn $w={17}><Arrow $dir="l" /></ScrollBtn>
          <ScrollBtn $w={17} />
          <ScrollTrack />
          <ScrollBtn $w={15}><Arrow $dir="r" /></ScrollBtn>
        </ScrollRow>
      </LeftColumn>
      <Grip><GripHandle /></Grip>
      <RightColumn>
        <GroupBox $h={173}>
          <ChartHeader $focus>Ускорение на холостых %</ChartHeader>
          <MiniChart
            id="a"
            top={125}
            height={146}
            plot={{ l: 1157, t: 130, b: 250 }}
            zero={189.5}
            scale={0.6}
            ticks={[100, 50, 0, -50, -100]}
            bars={mkBars([-39, -53, 15, -100], [1173, 1219, 1264, 1310], [1188, 1234, 1279, 1325])}
            valueY={240}
            labelY={267}
          />
        </GroupBox>
        <GroupBox $h={174}>
          <ChartHeader>Ускорение под нагрузкой %</ChartHeader>
          <MiniChart
            id="b"
            top={301}
            height={146}
            plot={{ l: 1157, t: 307, b: 427 }}
            zero={426}
            scale={1.185}
            ticks={[100, 80, 60, 40, 20, 0]}
            bars={mkBars([67, 100, 85, 84], [1173, 1219, 1264, 1310], [1188, 1234, 1279, 1325])}
            valueY={417}
            labelY={445}
          />
        </GroupBox>
        <GroupBox $h={174}>
          <ChartHeader>Относительная компрессия %</ChartHeader>
          <MiniChart
            id="c"
            top={479}
            height={146}
            plot={{ l: 1154, t: 484, b: 601 }}
            zero={600}
            scale={1.12}
            ticks={[100, 80, 60, 40, 20, 0]}
            bars={mkBars([100, 96, 100, 95], [1170, 1217, 1263, 1310], [1186, 1232, 1278, 1325])}
            valueY={594}
            labelY={622}
            bold
          />
        </GroupBox>
      </RightColumn>
    </Body>
    <Bottom>
      <SplitBar><SplitMark /><SplitMark /></SplitBar>
      <Controls>
        <FieldStack>
          <FieldRow>
            <FieldLabel $w={43}>Синхро:</FieldLabel>
            <Combo $w={202}>{'4.   канал № 4'}<Arrow $dir="d" /></Combo>
          </FieldRow>
          <FieldRow>
            <FieldLabel $w={43}>Сигнал:</FieldLabel>
            <Combo $w={202}>{'1.   канал № 1'}<Arrow $dir="d" /></Combo>
          </FieldRow>
        </FieldStack>
        <VSep $ml={8} />
        <FieldStack>
          <FieldRow>
            <FieldLabel $w={49} $right>УОЗ</FieldLabel>
            <Spin style={{ marginLeft: 7 }}>10<SpinArrows><Arrow $dir="u" /><Arrow $dir="d" /></SpinArrows></Spin>
            <MiniText>36-2</MiniText>
          </FieldRow>
          <FieldRow>
            <FieldLabel $w={49} $right>Порядок</FieldLabel>
            <Combo $w={98} $ml={7}>1-3-4-2<Arrow $dir="d" /></Combo>
            <Combo $w={34} $ml={7}>1<Arrow $dir="d" /></Combo>
          </FieldRow>
        </FieldStack>
        <VSep $ml={6} />
        <Measures>
          <Measure $c="#e01010">M1=0.00</Measure>
          <Measure $c="#1010d0">M2=7.00</Measure>
          <Measure $c="#800080">ΔM1=7.00</Measure>
        </Measures>
        <VSep $ml={0} />
        <RunButton><RunIcon />Анализ</RunButton>
      </Controls>
    </Bottom>
    <StatusBar>
      <StatusCell $w={189}>USB Осциллограф не подключен</StatusCell>
      <StatusCell />
    </StatusBar>
  </Window>
);

export default App;
